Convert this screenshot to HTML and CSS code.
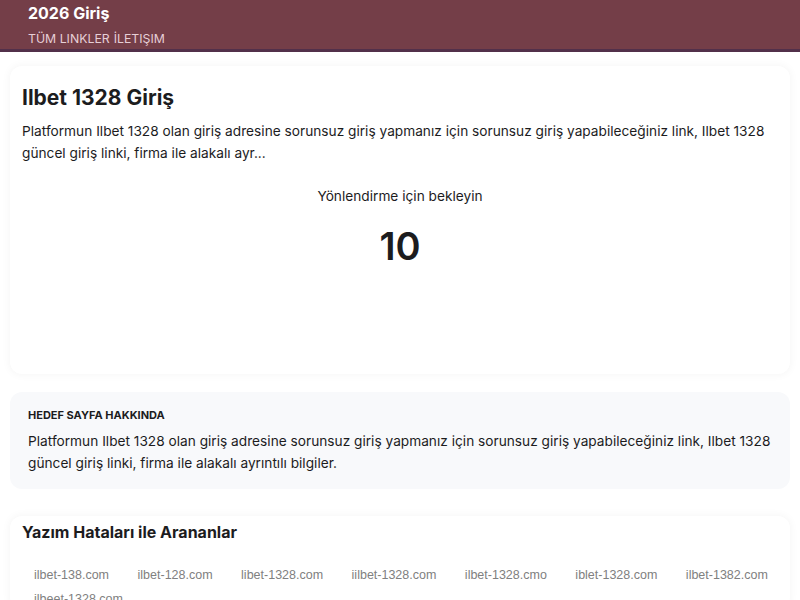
FILE: index.html
```html
<!DOCTYPE html>
<html lang="tr">
<head>
<meta charset="utf-8">
<title>Ilbet 1328 Giriş</title>
<link rel="stylesheet" href="styles.css">
</head>
<body>
<header class="site-header">
  <div class="brand">2026 Giriş</div>
  <nav class="nav">
    <a href="#">TÜM LINKLER</a>
    <a href="#">İLETIŞIM</a>
  </nav>
</header>
<main class="page">
  <section class="card hero">
    <h1 class="hero-title">Ilbet 1328 Giriş</h1>
    <p class="hero-text">Platformun Ilbet 1328 olan giriş adresine sorunsuz giriş yapmanız için sorunsuz giriş yapabileceğiniz link, Ilbet 1328 güncel giriş linki, firma ile alakalı ayr...</p>
    <div class="redirect">
      <div class="redirect-label">Yönlendirme için bekleyin</div>
      <div class="countdown">10</div>
    </div>
  </section>
  <section class="about">
    <h2 class="about-title">HEDEF SAYFA HAKKINDA</h2>
    <p class="about-text">Platformun Ilbet 1328 olan giriş adresine sorunsuz giriş yapmanız için sorunsuz giriş yapabileceğiniz link, Ilbet 1328 güncel giriş linki, firma ile alakalı ayrıntılı bilgiler.</p>
  </section>
  <section class="card typos">
    <h2 class="typos-title">Yazım Hataları ile Arananlar</h2>
    <ul class="typo-list">
      <li>ilbet-138.com</li>
      <li>ilbet-128.com</li>
      <li>libet-1328.com</li>
      <li>iilbet-1328.com</li>
      <li>ilbet-1328.cmo</li>
      <li>iblet-1328.com</li>
      <li>ilbet-1382.com</li>
      <li>ilbeet-1328.com</li>
    </ul>
  </section>
</main>
</body>
</html>
```

FILE: styles.css
```css
* { box-sizing: border-box; }

html, body {
  margin: 0;
  padding: 0;
  background: #ffffff;
  font-family: "Inter", "Noto Sans", sans-serif;
  color: #1c1c1e;
}

.site-header {
  background: #743e48;
  border-bottom: 3px solid #52304a;
  padding: 2px 28px 3px;
  height: 52px;
}

.brand {
  color: #ffffff;
  font-weight: 700;
  font-size: 16px;
  line-height: 22px;
}

.nav {
  display: flex;
  gap: 4px;
  margin-top: 6px;
}

.nav a {
  color: #e6cfd6;
  text-decoration: none;
  font-size: 12.3px;
  line-height: 18px;
}

.page {
  padding: 14px 10px 0;
  display: flex;
  flex-direction: column;
  gap: 18px;
}

.card {
  background: #ffffff;
  border-radius: 12px;
  box-shadow: 0 0 10px rgba(0, 0, 0, 0.05);
}

.hero {
  padding: 18px 12px 12px;
  height: 308px;
}

.hero-title {
  margin: 0 0 8px;
  font-size: 21px;
  line-height: 28px;
  font-weight: 700;
}

.hero-text {
  margin: 0;
  font-size: 13.7px;
  line-height: 22px;
}

.redirect {
  margin-top: 22px;
  text-align: center;
}

.redirect-label {
  font-size: 13.7px;
  line-height: 20px;
}

.countdown {
  margin-top: 17px;
  font-size: 38px;
  font-weight: 600;
  line-height: 46px;
}

.about {
  background: #f8f9fb;
  border-radius: 12px;
  padding: 16px 18px 15px;
}

.about-title {
  margin: 0 0 8px;
  font-size: 11px;
  line-height: 14px;
  font-weight: 700;
}

.about-text {
  margin: 0;
  font-size: 13.7px;
  line-height: 22px;
}

.typos {
  margin-top: 9px;
  padding: 6px 12px 0;
}

.typos-title {
  margin: 0;
  font-size: 16px;
  line-height: 20px;
  font-weight: 700;
}

.typo-list {
  list-style: none;
  margin: 23px 0 0;
  padding: 0 0 0 12px;
  display: flex;
  flex-wrap: wrap;
  column-gap: 28.5px;
  row-gap: 4px;
}

.typo-list li {
  font-family: "Liberation Sans", Arial, sans-serif;
  color: #808080;
  font-size: 12.5px;
  line-height: 20px;
}
```
